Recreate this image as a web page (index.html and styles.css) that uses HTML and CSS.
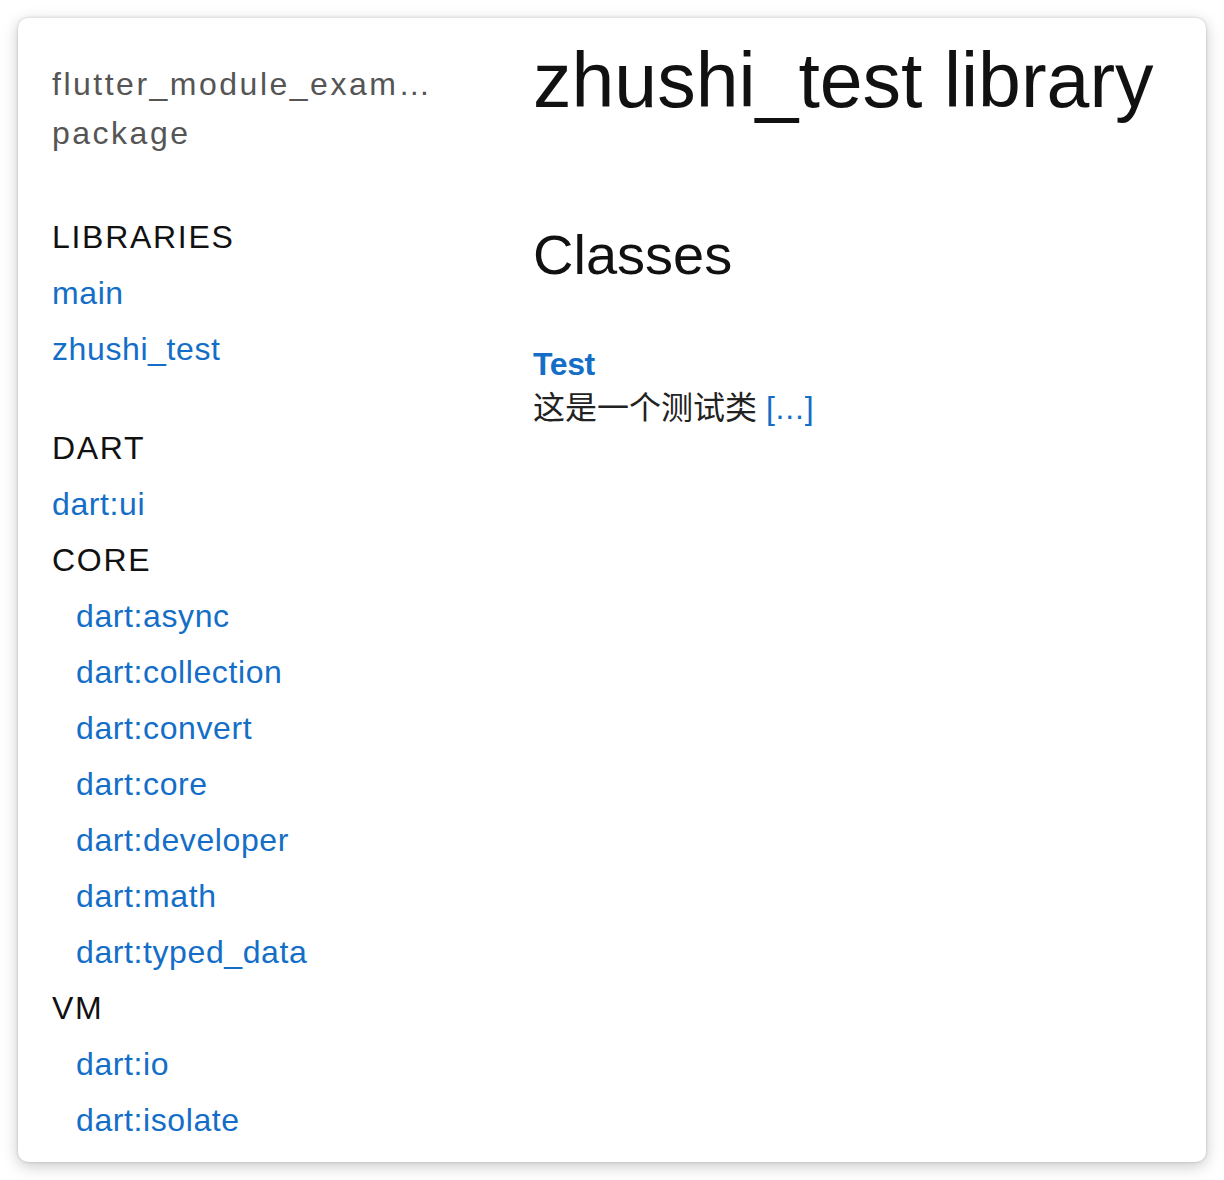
FILE: index.html
```html
<!DOCTYPE html>
<html lang="zh">
<head>
<meta charset="utf-8">
<title>zhushi_test library</title>
<link rel="stylesheet" href="styles.css">
</head>
<body>
<div class="window">
  <aside class="sidebar">
    <div class="package">
      <div class="package-name" title="flutter_module_example">flutter_module_example</div>
      <div class="package-kind">package</div>
    </div>
    <ul class="nav">
      <li class="section-title">Libraries</li>
      <li><a href="#">main</a></li>
      <li><a href="#">zhushi_test</a></li>
      <li class="section-title spaced">Dart</li>
      <li><a href="#">dart:ui</a></li>
      <li class="section-subtitle">Core</li>
      <li class="indent"><a href="#">dart:async</a></li>
      <li class="indent"><a href="#">dart:collection</a></li>
      <li class="indent"><a href="#">dart:convert</a></li>
      <li class="indent"><a href="#">dart:core</a></li>
      <li class="indent"><a href="#">dart:developer</a></li>
      <li class="indent"><a href="#">dart:math</a></li>
      <li class="indent"><a href="#">dart:typed_data</a></li>
      <li class="section-subtitle">VM</li>
      <li class="indent"><a href="#">dart:io</a></li>
      <li class="indent"><a href="#">dart:isolate</a></li>
    </ul>
  </aside>
  <main class="content">
    <h1 class="title">zhushi_test library</h1>
    <h2 class="section">Classes</h2>
    <dl class="classes">
      <dt><a href="#">Test</a></dt>
      <dd>这是一个测试类 <a href="#">[...]</a></dd>
    </dl>
  </main>
</div>
</body>
</html>
```

FILE: styles.css
```css
html, body {
  margin: 0;
  padding: 0;
  background: #ffffff;
}

body {
  font-family: "Liberation Sans", "Noto Sans CJK SC", sans-serif;
  color: #111;
}

.window {
  margin: 18px;
  width: 1188px;
  height: 1144px;
  border-radius: 10px;
  background: #fff;
  box-shadow: 0 0 3px rgba(0, 0, 0, 0.18), 0 4px 16px rgba(0, 0, 0, 0.22);
  overflow: hidden;
  display: flex;
  box-sizing: border-box;
  padding: 0 0 0 34px;
}

.sidebar {
  width: 385px;
  flex: none;
  padding-top: 42px;
}

.package {
  color: #555;
  font-size: 32px;
  line-height: 49px;
  letter-spacing: 2.5px;
}

.package-name {
  white-space: nowrap;
  overflow: hidden;
  text-overflow: ellipsis;
}

.nav {
  list-style: none;
  margin: 51px 0 0 0;
  padding: 0;
  font-size: 32px;
  line-height: 56px;
}

.nav a {
  color: #146ec7;
  text-decoration: none;
  letter-spacing: 0.6px;
}

.section-title,
.section-subtitle {
  text-transform: uppercase;
  color: #111;
  letter-spacing: 1.7px;
}

.section-title.spaced {
  margin-top: 43px;
}

.indent {
  padding-left: 24px;
}

.content {
  margin-left: 96px;
  flex: 1;
  padding-top: 19px;
}

.title {
  margin: 0;
  font-size: 77px;
  font-weight: 400;
  line-height: 86px;
  color: #111;
}

.section {
  margin: 101px 0 0 0;
  font-size: 56px;
  font-weight: 400;
  line-height: 62px;
  color: #111;
}

.classes {
  margin: 56px 0 0 0;
  font-size: 32px;
  line-height: 44px;
}

.classes dt a {
  font-weight: 700;
  color: #146ec7;
  text-decoration: none;
  letter-spacing: -0.4px;
}

.classes dd {
  margin: 0;
  color: #222;
}

.classes dd a {
  color: #146ec7;
  text-decoration: none;
  letter-spacing: 0.8px;
}
```
